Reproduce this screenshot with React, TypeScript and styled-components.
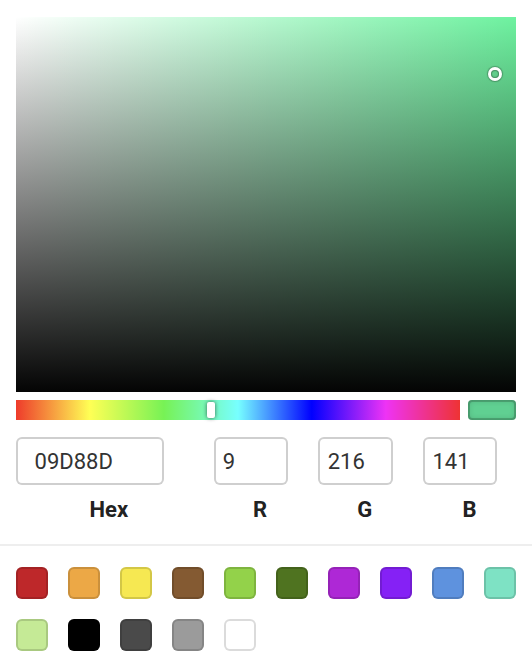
import React from 'react';
import styled, { createGlobalStyle } from 'styled-components';

const GlobalStyle = createGlobalStyle`
  html, body {
    margin: 0;
    padding: 0;
    background: #fff;
  }
  body {
    font-family: Roboto, "Noto Sans", "Liberation Sans", sans-serif;
  }
`;

type Rgb = { r: number; g: number; b: number };

const current: Rgb = { r: 9, g: 216, b: 141 };

const presetColors = [
  '#BE282A', '#ECA846', '#F6E852', '#845A32', '#93D24A',
  '#4F7320', '#AE28D6', '#8521F5', '#5E92DE', '#7EE2C4',
  '#C5EA96', '#000000', '#4A4A4A', '#9B9B9B', '#FFFFFF',
];

const toHsv = ({ r, g, b }: Rgb) => {
  const max = Math.max(r, g, b);
  const min = Math.min(r, g, b);
  const d = max - min;
  let h = 0;
  if (d !== 0) {
    if (max === r) h = ((g - b) / d) % 6;
    else if (max === g) h = (b - r) / d + 2;
    else h = (r - g) / d + 4;
  }
  h = (h * 60 + 360) % 360;
  return { h, s: max === 0 ? 0 : d / max, v: max / 255 };
};

const toHex = ({ r, g, b }: Rgb) =>
  [r, g, b].map((n) => n.toString(16).padStart(2, '0')).join('').toUpperCase();

const ColorPicker = () => {
  const hsv = toHsv(current);

  return (
    <Picker>
      <Saturation>
        <WhiteLayer />
        <BlackLayer />
        <SatPointer style={{ left: `${hsv.s * 100}%`, top: `${(1 - hsv.v) * 100}%` }} />
      </Saturation>

      <Controls>
        <HueBar>
          <HuePointer style={{ left: `${(hsv.h / 360) * 100}%` }} />
        </HueBar>
        <ActiveColor />
      </Controls>

      <Fields>
        <Field $double>
          <Input defaultValue={toHex(current)} />
          <Label>Hex</Label>
        </Field>
        <Field>
          <Input defaultValue={current.r} />
          <Label>R</Label>
        </Field>
        <Field>
          <Input defaultValue={current.g} />
          <Label>G</Label>
        </Field>
        <Field>
          <Input defaultValue={current.b} />
          <Label>B</Label>
        </Field>
      </Fields>

      <Presets>
        {presetColors.map((c) => (
          <Swatch key={c} $color={c} />
        ))}
      </Presets>
    </Picker>
  );
};

const Picker = styled.div`
  width: 532px;
  box-sizing: border-box;
  padding: 17px 16px 0;
  background: #fff;
`;

const Saturation = styled.div`
  position: relative;
  height: 375px;
  background: rgb(110, 242, 160);
`;

const WhiteLayer = styled.div`
  position: absolute;
  inset: 0;
  background: linear-gradient(to right, #fff, rgba(255, 255, 255, 0));
`;

const BlackLayer = styled.div`
  position: absolute;
  inset: 0;
  background: linear-gradient(to top, #040404, rgba(0, 0, 0, 0));
`;

const SatPointer = styled.div`
  position: absolute;
  width: 8px;
  height: 8px;
  border-radius: 50%;
  transform: translate(-4px, -4px);
  box-shadow: 0 0 0 3px #fff, inset 0 0 1px 1px rgba(0, 0, 0, 0.3),
    0 0 1px 4px rgba(0, 0, 0, 0.25);
`;

const Controls = styled.div`
  display: flex;
  gap: 8px;
  margin-top: 8px;
  height: 20px;
`;

const HueBar = styled.div`
  position: relative;
  flex: 1;
  background: linear-gradient(
    to right,
    #ee3b2b 0%,
    #ffff55 16.6%,
    #77f255 33.3%,
    #77ffff 50%,
    #0000ff 66.6%,
    #ee33f5 83.3%,
    #ee3333 100%
  );
`;

const HuePointer = styled.div`
  position: absolute;
  top: 2px;
  width: 8px;
  height: 16px;
  border-radius: 2px;
  background: #fff;
  transform: translateX(-4px);
  box-shadow: 0 0 4px rgba(0, 0, 0, 0.6);
`;

const ActiveColor = styled.div`
  width: 48px;
  border-radius: 4px;
  background: #60d092;
  box-shadow: inset 0 0 0 2px rgba(0, 0, 0, 0.18), inset 0 0 6px rgba(0, 0, 0, 0.2);
`;

const Fields = styled.div`
  display: flex;
  margin-top: 17px;
`;

const Field = styled.div<{ $double?: boolean }>`
  flex: ${(p) => (p.$double ? 2 : 1)};
  padding-left: ${(p) => (p.$double ? 0 : 12)}px;
`;

const Input = styled.input`
  display: block;
  width: 80%;
  height: 48px;
  box-sizing: border-box;
  padding: 0 10%;
  border: none;
  outline: none;
  border-radius: 6px;
  box-shadow: inset 0 0 0 2px #cfcfcf;
  font-family: Roboto, "Noto Sans", "Liberation Sans", sans-serif;
  font-size: 22px;
  color: #333;
  background: #fff;
`;

const Label = styled.span`
  display: block;
  padding-top: 12px;
  line-height: 26px;
  text-align: center;
  font-size: 22px;
  font-weight: 700;
  color: #222;
`;

const Presets = styled.div`
  display: flex;
  flex-wrap: wrap;
  gap: 20px;
  margin: 21px -16px 0;
  padding: 21px 16px 0;
  border-top: 2px solid #eee;
`;

const Swatch = styled.div<{ $color: string }>`
  width: 32px;
  height: 32px;
  border-radius: 6px;
  background: ${(p) => p.$color};
  box-shadow: inset 0 0 0 2px rgba(0, 0, 0, 0.14);
`;

const App = () => (
  <>
    <GlobalStyle />
    <ColorPicker />
  </>
);

export default App;
